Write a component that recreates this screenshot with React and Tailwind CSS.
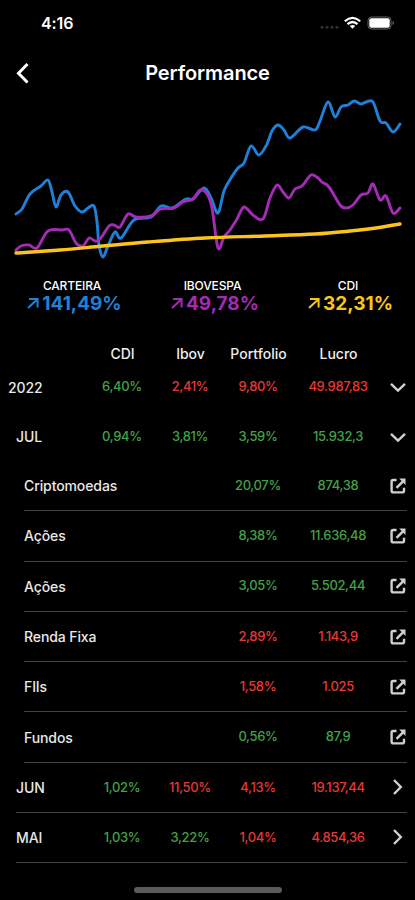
import React from 'react';

const BLUE = '#2080d8';
const PURPLE = '#a32bb5';
const YELLOW = '#fcc419';

const portfolioPoints = [
  [16, 214], [22, 209], [30, 194], [41, 186], [48, 180], [52, 192], [56, 207], [61, 195], [68, 192], [75, 206], [82, 212],
  [88, 208], [94, 206], [97, 222], [99, 245], [103, 257], [108, 246], [115, 232], [121, 238], [134, 220], [151, 217], [161, 206],
  [172, 208], [186, 199], [193, 199], [204, 188], [211, 198], [218, 213], [224, 191], [231, 178], [238, 168], [244, 163], [251, 146], [259, 155],
  [267, 144], [272, 131], [278, 125], [284, 130], [290, 138], [303, 127], [315, 130], [320, 121], [328, 102], [335, 117], [341, 107], [348, 105], [354, 101],
  [361, 104], [366, 102], [373, 102], [380, 121], [386, 123], [393, 132], [400, 124],
];

const ibovPoints = [
  [16, 250], [21, 246], [29, 245], [37, 248], [48, 231], [62, 230], [69, 230], [76, 243], [83, 246], [89, 238], [95, 241],
  [100, 239], [109, 226], [114, 225], [120, 227], [128, 214], [136, 217], [151, 216], [161, 209], [174, 208], [183, 202], [193, 199],
  [200, 190], [207, 194], [212, 208], [218, 248], [224, 237], [230, 230], [237, 219], [244, 207], [253, 215], [263, 219], [270, 198], [277, 185],
  [283, 192], [289, 198], [295, 189], [302, 186], [311, 175], [318, 178], [322, 182], [329, 187], [340, 205], [346, 208], [353, 205], [361, 195],
  [368, 193], [373, 184], [380, 200], [386, 196], [393, 213], [400, 208],
];

const cdiPoints = [[16, 253], [60, 250], [103, 246], [148, 242], [205, 238], [265, 236], [315, 234], [350, 231], [376, 228], [400, 224]];

// Catmull-Rom spline as cubic beziers
function smoothPath(pts) {
  const at = (i) => pts[Math.max(0, Math.min(pts.length - 1, i))];
  return pts.slice(1).reduce((d, p, i) => {
    const p0 = at(i - 1);
    const p1 = at(i);
    const p3 = at(i + 2);
    const c1 = [p1[0] + (p[0] - p0[0]) / 6, p1[1] + (p[1] - p0[1]) / 6];
    const c2 = [p[0] - (p3[0] - p1[0]) / 6, p[1] - (p3[1] - p1[1]) / 6];
    return `${d} C${c1.join(' ')} ${c2.join(' ')} ${p.join(' ')}`;
  }, `M${pts[0].join(' ')}`);
}

const indexes = [
  { label: 'CARTEIRA', value: '141,49%', color: 'text-[#2080d8]' },
  { label: 'IBOVESPA', value: '49,78%', color: 'text-[#a32bb5]' },
  { label: 'CDI', value: '32,31%', color: 'text-[#fcc419]' },
];

const assets = [
  { name: 'Criptomoedas', portfolio: '20,07%', profit: '874,38', up: true },
  { name: 'Ações', portfolio: '8,38%', profit: '11.636,48', up: true },
  { name: 'Ações', portfolio: '3,05%', profit: '5.502,44', up: true },
  { name: 'Renda Fixa', portfolio: '2,89%', profit: '1.143,9', up: false },
  { name: 'FIIs', portfolio: '1,58%', profit: '1.025', up: false },
  { name: 'Fundos', portfolio: '0,56%', profit: '87,9', up: true },
];

const tone = (up) => (up ? 'text-[#43a047]' : 'text-[#e53935]');

const ChevronIcon = ({ d }) => (
  <svg className="shrink-0" width="18" height="18" viewBox="0 0 18 18" fill="none" stroke="#d0d0d0" strokeWidth="2.4">
    <path d={d} />
  </svg>
);

const DownIcon = () => <ChevronIcon d="M2 5.8 9 12.6 16 5.8" />;
const RightIcon = () => <ChevronIcon d="M5 2 11.8 9 5 16" />;

const OpenIcon = () => (
  <svg className="shrink-0" width="18" height="18" viewBox="0 0 18 18" fill="none" stroke="#d0d0d0" strokeWidth="2.4">
    <path d="M7.5 3H4.2Q2.6 3 2.6 4.6V13.8Q2.6 15.4 4.2 15.4H13.4Q15 15.4 15 13.8V10.8" />
    <path d="M7.5 10.8 14 4.3" />
    <path d="M10.2 1.6H16.5V7.9Z" fill="#d0d0d0" stroke="none" />
  </svg>
);

const TrendIcon = () => (
  <svg width="13" height="13" viewBox="0 0 13 13" fill="none" stroke="currentColor" strokeWidth="2">
    <path d="M3 2H11.6V10.6M11.4 2.2 2 11" />
  </svg>
);

const PeriodRow = ({ label, cdi, ibov, portfolio, profit, up, icon, className }) => (
  <div className={`flex items-center text-[13px] font-medium tracking-[-0.35px] ${className}`}>
    <span className="flex-1 text-[14px] tracking-[-0.1px] text-[#e8e8e8]">{label}</span>
    <span className={`w-[68px] text-center ${tone(up[0])}`}>{cdi}</span>
    <span className={`w-[68px] text-center ${tone(up[1])}`}>{ibov}</span>
    <span className={`w-[68px] text-center ${tone(up[2])}`}>{portfolio}</span>
    <span className={`w-[92px] text-center ${tone(up[3])}`}>{profit}</span>
    <span className="flex w-[23px] justify-end">{icon}</span>
  </div>
);

const AssetRow = ({ name, portfolio, profit, up }) => (
  <div className="ml-6 mr-2 flex h-[50.3px] items-center border-b border-[#424242] text-[13px] font-medium tracking-[-0.35px]">
    <span className="flex-1 text-[14px] tracking-[-0.1px] text-[#e8e8e8]">{name}</span>
    <span className={`w-[68px] text-center ${tone(up)}`}>{portfolio}</span>
    <span className={`w-[92px] text-center ${tone(up)}`}>{profit}</span>
    <span className="flex w-[23px] justify-end"><OpenIcon /></span>
  </div>
);

export default function App() {
  return (
    <div className="flex h-[900px] w-[415px] flex-col overflow-hidden bg-black font-['Inter',sans-serif] text-white">
      {/* Status bar */}
      <div className="flex h-[46px] shrink-0 items-center justify-between pl-[41px] pr-[21px]">
        <span className="text-[16px] font-semibold tracking-[-0.1px]">4:16</span>
        <svg width="76" height="20" viewBox="0 0 76 20" fill="none">
          <g fill="#303030">
            <circle cx="4" cy="14.2" r="1.5" />
            <circle cx="9" cy="14.2" r="1.5" />
            <circle cx="14" cy="14.2" r="1.5" />
            <circle cx="19" cy="14.2" r="1.5" />
          </g>
          <g stroke="#fff" strokeWidth="2.2">
            <path d="M26.8 8.2Q34.5 1.4 42.2 8.2" />
            <path d="M29.5 11.2Q34.5 6.8 39.5 11.2" />
          </g>
          <path d="M31.8 13Q34.5 10.8 37.2 13L34.5 15.8Z" fill="#fff" />
          <rect x="50" y="4" width="23" height="12" rx="3.5" stroke="#666" />
          <rect x="51.3" y="5.3" width="20.4" height="9.4" rx="2" fill="#fff" />
          <path d="M74.5 8V12Q76 11.5 76 10T74.5 8Z" fill="#666" />
        </svg>
      </div>

      {/* Header */}
      <div className="grid h-[53px] shrink-0 grid-cols-[1fr_auto_1fr] items-center">
        <svg className="ml-[15px]" width="16" height="22" viewBox="0 0 16 22" fill="none" stroke="#fff" strokeWidth="3">
          <path d="M12.5 2 3.5 11.3 12.5 20.5" />
        </svg>
        <h1 className="pt-px text-[20px] font-semibold tracking-[-0.1px]">Performance</h1>
        <span />
      </div>

      {/* Chart */}
      <svg className="shrink-0" width="415" height="177" viewBox="0 99 415 177" fill="none" strokeWidth="2.9" strokeLinecap="round" strokeLinejoin="round">
        <path d={smoothPath(portfolioPoints)} stroke={BLUE} />
        <path d={smoothPath(ibovPoints)} stroke={PURPLE} />
        <path d={smoothPath(cdiPoints)} stroke={YELLOW} strokeWidth="3.4" />
      </svg>

      {/* Indexes */}
      <div className="grid h-[63px] shrink-0 grid-cols-[144px_137px_134px] pt-[2px] text-center">
        {indexes.map((item) => (
          <div key={item.label}>
            <div className="text-[12px] font-medium leading-[16px] tracking-[-0.15px]">{item.label}</div>
            <div className={`flex items-center justify-center gap-[3px] pl-1 text-[19px] font-bold leading-[19px] ${item.color}`}>
              <TrendIcon />
              {item.value}
            </div>
          </div>
        ))}
      </div>

      {/* Table */}
      <div className="flex h-[28px] shrink-0 items-center pr-[30.5px] text-[14px] font-medium text-[#eee]">
        <span className="flex-1" />
        <span className="w-[68px] text-center">CDI</span>
        <span className="w-[68px] text-center">Ibov</span>
        <span className="w-[68px] text-center">Portfolio</span>
        <span className="w-[92px] text-center">Lucro</span>
      </div>
      <PeriodRow className="h-[40px] pl-2 pr-2" label="2022" cdi="6,40%" ibov="2,41%" portfolio="9,80%" profit="49.987,83" up={[true, false, false, false]} icon={<DownIcon />} />
      <PeriodRow className="h-[59px] pl-4 pr-2" label="JUL" cdi="0,94%" ibov="3,81%" portfolio="3,59%" profit="15.932,3" up={[true, true, true, true]} icon={<DownIcon />} />
      <div className="-mt-[5px]">
        {assets.map((asset, i) => <AssetRow key={i} {...asset} />)}
      </div>
      <PeriodRow className="ml-4 mr-2 h-[50px] border-b border-[#424242]" label="JUN" cdi="1,02%" ibov="11,50%" portfolio="4,13%" profit="19.137,44" up={[true, false, false, false]} icon={<RightIcon />} />
      <PeriodRow className="ml-4 mr-2 h-[50px] border-b border-[#424242]" label="MAI" cdi="1,03%" ibov="3,22%" portfolio="1,04%" profit="4.854,36" up={[true, true, false, false]} icon={<RightIcon />} />

      <div className="mx-auto mb-[7px] mt-auto h-[6px] w-[148px] rounded-full bg-[#5a5a5a]" />
    </div>
  );
}
